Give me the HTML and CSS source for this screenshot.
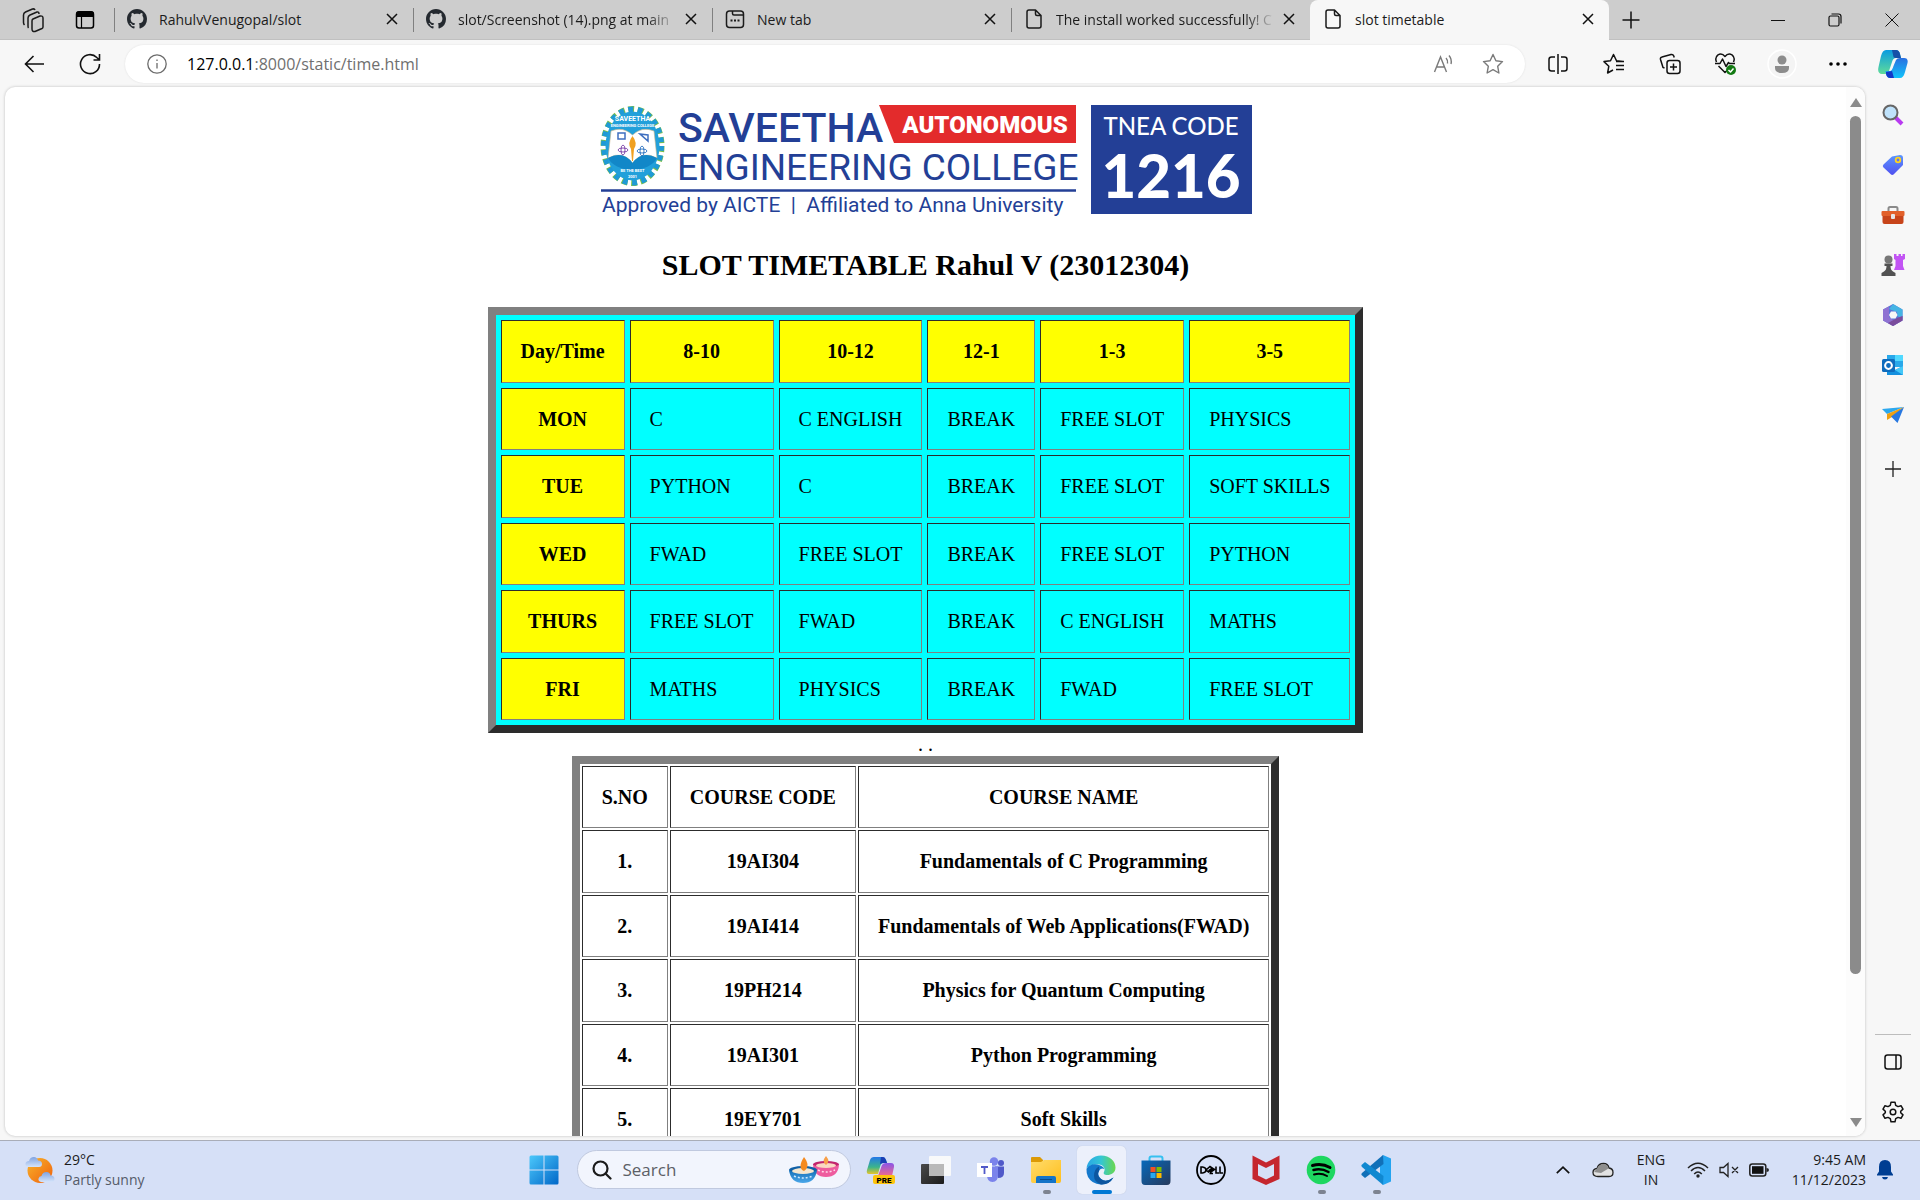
FILE: index.html
```html
<!DOCTYPE html>
<html lang="en">
<head>
<meta charset="utf-8">
<title>slot timetable</title>
<link rel="stylesheet" href="styles.css">
</head>
<body>
<svg class="defs" aria-hidden="true">
  <defs>
    <linearGradient id="gBlue" x1="0" y1="0" x2="1" y2="1"><stop offset="0" stop-color="#4cc8fb"/><stop offset="1" stop-color="#0067c8"/></linearGradient>
    <linearGradient id="gTeal" x1="0" y1="0" x2="0" y2="1"><stop offset="0" stop-color="#0a9be0"/><stop offset="1" stop-color="#5fdc9a"/></linearGradient>
    <linearGradient id="gSky" x1="0" y1="0" x2="0" y2="1"><stop offset="0" stop-color="#2a6fe0"/><stop offset="1" stop-color="#12c4fb"/></linearGradient>
    <linearGradient id="gPink" x1="0" y1="0" x2="0" y2="1"><stop offset="0" stop-color="#8a55e8"/><stop offset="1" stop-color="#f06a8c"/></linearGradient>
    <linearGradient id="gRain" x1="0" y1="0" x2="0" y2="1"><stop offset="0" stop-color="#2478e8"/><stop offset=".6" stop-color="#3cb58a"/><stop offset="1" stop-color="#e8c52a"/></linearGradient>
    <linearGradient id="gTag" x1="0" y1="0" x2="0" y2="1"><stop offset="0" stop-color="#5a96ff"/><stop offset="1" stop-color="#5050f0"/></linearGradient>
    <linearGradient id="gSun" x1="0" y1="0" x2="1" y2="1"><stop offset="0" stop-color="#f8b52c"/><stop offset="1" stop-color="#f0600c"/></linearGradient>
    <linearGradient id="gCloud" x1="0" y1="0" x2="0" y2="1"><stop offset="0" stop-color="#7fa3e2"/><stop offset="1" stop-color="#d5e4fa"/></linearGradient>
    <linearGradient id="gFold" x1="0" y1="0" x2="1" y2="1"><stop offset="0" stop-color="#ffdc6c"/><stop offset="1" stop-color="#ffbe1c"/></linearGradient>
    <linearGradient id="gEdge" x1="0" y1="0" x2="1" y2="0"><stop offset="0" stop-color="#2aa6e6"/><stop offset=".5" stop-color="#34c6d4"/><stop offset="1" stop-color="#6ad84c"/></linearGradient>
    <linearGradient id="gStore" x1="0" y1="0" x2="1" y2="1"><stop offset="0" stop-color="#0669bb"/><stop offset="1" stop-color="#273a5c"/></linearGradient>
    <linearGradient id="gPane" x1="0" y1="0" x2="1" y2="1"><stop offset="0" stop-color="#4a4a4a"/><stop offset="1" stop-color="#1c1c1c"/></linearGradient>
    <linearGradient id="gBowl" x1="0" y1="0" x2="0" y2="1"><stop offset="0" stop-color="#1470b8"/><stop offset="1" stop-color="#4ca8ea"/></linearGradient>
  </defs>
</svg>

<div class="browser">
  <header class="tabstrip">
    <div class="strip-start">
      <button class="icon-btn" aria-label="Workspaces"><svg width="22" height="26" viewBox="0 0 22 26" fill="none" stroke="#1b1b1b" stroke-width="1.5" stroke-linejoin="round"><path d="M11 12 L18 9 Q21 8.500 21 11 V20 Q21 21 20 21.500 L13 24.500 Q10 25 10 22 V14 Q10 12.500 11 12Z"/><path d="M6.500 21 Q6 20.500 6 19 V11 Q6 9 8 8 L15 5 Q17 4.500 17 7"/><path d="M2.500 18 Q1.500 17 1.500 15.500 V8 Q1.500 6 3.500 5 L10.500 2 Q12.500 1.500 13 3"/></svg></button>
      <button class="icon-btn" aria-label="Tab actions"><svg width="20" height="20" viewBox="0 0 20 20"><rect x="1.500" y="2" width="17" height="16" rx="2.500" fill="none" stroke="#000" stroke-width="1.500"/><path d="M1 7V4Q1 1 4 1H16Q19 1 19 4V7Z"/><path d="M6.500 7V18" stroke="#000" stroke-width="1.200"/></svg></button>
    </div>
    <nav class="tabs" aria-label="Tabs">
      <div class="tab"><svg class="fav" viewBox="0 0 16 16" fill="#24292f"><path d="M8 0C3.580 0 0 3.580 0 8c0 3.540 2.290 6.530 5.470 7.590.4.070.55-.17.55-.38 0-.19-.01-.82-.01-1.490-2.010.37-2.530-.49-2.690-.94-.09-.23-.48-.94-.82-1.130-.28-.15-.68-.52-.01-.53.63-.01 1.080.58 1.230.82.72 1.210 1.870.87 2.330.66.070-.52.28-.87.510-1.070-1.780-.2-3.640-.89-3.640-3.950 0-.87.310-1.590.82-2.150-.08-.2-.36-1.020.08-2.120 0 0 .67-.21 2.200.82.64-.18 1.320-.27 2-.27s1.360.09 2 .27c1.530-1.040 2.200-.82 2.200-.82.44 1.100.16 1.920.08 2.120.51.56.82 1.270.82 2.150 0 3.070-1.870 3.750-3.650 3.950.29.25.54.73.54 1.480 0 1.070-.01 1.930-.01 2.200 0 .21.15.46.55.38A8.010 8.010 0 0 0 16 8c0-4.420-3.580-8-8-8z"/></svg><a class="tab-title" href="#">RahulvVenugopal/slot</a><button class="tab-close" aria-label="Close tab"><svg width="12" height="12" viewBox="0 0 12 12" stroke="#111" stroke-width="1.500"><path d="M1 1 11 11M11 1 1 11"/></svg></button></div>
      <div class="tab"><svg class="fav" viewBox="0 0 16 16" fill="#24292f"><path d="M8 0C3.580 0 0 3.580 0 8c0 3.540 2.290 6.530 5.470 7.590.4.070.55-.17.55-.38 0-.19-.01-.82-.01-1.490-2.010.37-2.530-.49-2.690-.94-.09-.23-.48-.94-.82-1.130-.28-.15-.68-.52-.01-.53.63-.01 1.080.58 1.230.82.72 1.210 1.870.87 2.330.66.070-.52.28-.87.510-1.070-1.780-.2-3.640-.89-3.640-3.950 0-.87.310-1.590.82-2.150-.08-.2-.36-1.020.08-2.120 0 0 .67-.21 2.200.82.64-.18 1.320-.27 2-.27s1.360.09 2 .27c1.530-1.040 2.200-.82 2.200-.82.44 1.100.16 1.920.08 2.120.51.56.82 1.270.82 2.150 0 3.070-1.870 3.750-3.650 3.950.29.25.54.73.54 1.480 0 1.070-.01 1.930-.01 2.200 0 .21.15.46.55.38A8.010 8.010 0 0 0 16 8c0-4.420-3.580-8-8-8z"/></svg><a class="tab-title fade" href="#">slot/Screenshot (14).png at main</a><button class="tab-close" aria-label="Close tab"><svg width="12" height="12" viewBox="0 0 12 12" stroke="#111" stroke-width="1.500"><path d="M1 1 11 11M11 1 1 11"/></svg></button></div>
      <div class="tab"><svg class="fav" viewBox="0 0 20 20" fill="none" stroke="#1b1b1b" stroke-width="1.500"><rect x="1.500" y="2" width="17" height="16.500" rx="3"/><path d="M7.500 2V4.500Q7.500 6 9 6H18.500"/><path d="M5.500 11.500h2M9 11.500h2M12.500 11.500h2" stroke-width="2"/></svg><a class="tab-title" href="#">New tab</a><button class="tab-close" aria-label="Close tab"><svg width="12" height="12" viewBox="0 0 12 12" stroke="#111" stroke-width="1.500"><path d="M1 1 11 11M11 1 1 11"/></svg></button></div>
      <div class="tab"><svg class="fav" viewBox="0 0 20 20" fill="none" stroke="#1b1b1b" stroke-width="1.500" stroke-linejoin="round"><path d="M5 1H11.500L17 6.500V17Q17 19 15 19H5Q3 19 3 17V3Q3 1 5 1ZM11.500 1V5Q11.500 6.500 13 6.500H17"/></svg><a class="tab-title fade" href="#">The install worked successfully! C</a><button class="tab-close" aria-label="Close tab"><svg width="12" height="12" viewBox="0 0 12 12" stroke="#111" stroke-width="1.500"><path d="M1 1 11 11M11 1 1 11"/></svg></button></div>
      <div class="tab active"><svg class="fav" viewBox="0 0 20 20" fill="none" stroke="#1b1b1b" stroke-width="1.500" stroke-linejoin="round"><path d="M5 1H11.500L17 6.500V17Q17 19 15 19H5Q3 19 3 17V3Q3 1 5 1ZM11.500 1V5Q11.500 6.500 13 6.500H17"/></svg><a class="tab-title" href="#">slot timetable</a><button class="tab-close" aria-label="Close tab"><svg width="12" height="12" viewBox="0 0 12 12" stroke="#111" stroke-width="1.500"><path d="M1 1 11 11M11 1 1 11"/></svg></button></div>
    </nav>
    <button class="icon-btn new-tab" aria-label="New tab"><svg width="18" height="18" viewBox="0 0 18 18" stroke="#111" stroke-width="1.500"><path d="M9 0.500V17.500M.5 9H17.500"/></svg></button>
    <div class="window-controls">
      <button class="icon-btn" aria-label="Minimize"><svg width="14" height="14" viewBox="0 0 14 14"><path d="M0 7.500H14" stroke="#111"/></svg></button>
      <button class="icon-btn" aria-label="Restore"><svg width="14" height="14" viewBox="0 0 14 14" fill="none" stroke="#111" stroke-width="1.200"><rect x="1" y="3" width="10" height="10" rx="1.500"/><path d="M3.500 1H10.500Q13 1 13 3.500V10.500"/></svg></button>
      <button class="icon-btn" aria-label="Close"><svg width="14" height="14" viewBox="0 0 14 14"><path d="M.5.500 13.500 13.500M13.500.500.500 13.500" stroke="#111"/></svg></button>
    </div>
  </header>

  <div class="toolbar">
    <button class="icon-btn nav-btn" aria-label="Back"><svg width="20" height="18" viewBox="0 0 20 18" fill="none" stroke="#111" stroke-width="1.600"><path d="M20 9H1.500M9.500 1 1.500 9 9.500 17"/></svg></button>
    <button class="icon-btn nav-btn" aria-label="Refresh"><svg width="22" height="22" viewBox="0 0 22 22" fill="none" stroke="#111" stroke-width="1.600"><path d="M20.500 11A9.500 9.500 0 1 1 17.800 4.500L20.500 7M20.500 1V7H14.500"/></svg></button>
    <form class="address">
      <svg width="20" height="20" viewBox="0 0 20 20" fill="none" stroke="#6b6b6b" stroke-width="1.300"><circle cx="10" cy="10" r="9.200"/><path d="M10 9V14.500M10 5.500V7"/></svg>
      <a class="url" href="#"><b>127.0.0.1</b>:8000/static/time.html</a>
      <button class="icon-btn addr-btn" type="button" aria-label="Read aloud"><svg width="22" height="22" viewBox="0 0 22 22" fill="none" stroke="#7a7a7a" stroke-width="1.400"><path d="M1.500 19 7.500 4 13.500 19M3.500 14H11.500"/><path d="M13 5Q15 7 14.500 10.500M16 2.500Q19 6 18 11"/></svg></button>
      <button class="icon-btn addr-btn" type="button" aria-label="Favorite"><svg width="22" height="22" viewBox="0 0 22 22" fill="none" stroke="#7a7a7a" stroke-width="1.400" stroke-linejoin="round"><path d="M11 1.500 13.900 7.800 20.500 8.600 15.700 13.300 16.900 20 11 16.700 5.100 20 6.300 13.300 1.500 8.600 8.100 7.800Z"/></svg></button>
    </form>
    <div class="actions">
      <button class="icon-btn" aria-label="Split screen"><svg width="20" height="20" viewBox="0 0 20 20" fill="none" stroke="#111" stroke-width="1.500"><path d="M7 3H3.500Q1 3 1 5.500V14.500Q1 17 3.500 17H7M13 3H16.500Q19 3 19 5.500V14.500Q19 17 16.500 17H13M10 0V20"/></svg></button>
      <button class="icon-btn" aria-label="Favorites"><svg width="22" height="22" viewBox="0 0 22 22" fill="none" stroke="#111" stroke-width="1.500" stroke-linejoin="round"><path d="M20 8.500 13.500 7.800 10.500 1.500 7.500 7.800 1 8.600 5.800 13.300 4.600 20 10 17M13 12.500H21M13 8.500H21M13 16.500H21"/></svg></button>
      <button class="icon-btn" aria-label="Collections"><svg width="22" height="22" viewBox="0 0 22 22" fill="none" stroke="#111" stroke-width="1.500"><rect x="8" y="7.500" width="13" height="13" rx="2.500"/><path d="M14.500 10.500V17.500M11 14H18"/><path d="M5.500 15 4 14.500 1.500 6.500Q1 4.500 3 4L12 1.500Q14 1 14.800 3L15.200 4.500"/></svg></button>
      <button class="icon-btn" aria-label="Browser essentials"><svg width="24" height="24" viewBox="0 0 24 24" fill="none" stroke="#111" stroke-width="1.500" stroke-linejoin="round"><path d="M2.500 10Q.5 5.500 4 2.800 8 .8 11 4.500 14 .8 18 2.800 21.500 5.500 19.500 10M4.500 14 11 20.500 13 18.500M1 11.500H6L8.500 7 12 14.500 14.500 10.500 15.500 11.500H21"/><circle cx="17" cy="18" r="5" fill="#137a13" stroke="none"/><path d="M14.500 18 16.500 20 19.500 16.500" stroke="#fff"/></svg></button>
      <button class="icon-btn" aria-label="Profile"><svg width="30" height="30" viewBox="0 0 30 30"><circle cx="15" cy="15" r="14" fill="#f4f4f4" stroke="#fff" stroke-width="1.500"/><circle cx="15" cy="11" r="4.500" fill="#8c8c8c"/><path d="M8 17H22V19Q22 24 15 24T8 19Z" fill="#8c8c8c"/></svg></button>
      <button class="icon-btn" aria-label="More"><svg width="18" height="4" viewBox="0 0 18 4"><circle cx="2" cy="2" r="1.800"/><circle cx="9" cy="2" r="1.800"/><circle cx="16" cy="2" r="1.800"/></svg></button>
      <button class="icon-btn last" aria-label="Copilot"><svg width="30" height="30" viewBox="0 0 30 30"><path d="M8 1H18Q21 1 22 5L23 9H18Q15 9 14 13L11 22Q10 25 7 25H4Q-1 25 .5 18L3 7Q4.500 1 8 1Z" fill="url(#gTeal)"/><path d="M14 1H18Q21 1 22 5L23 9H18Q16 9 15.500 8Z" fill="#1650a8"/><path d="M22 29H12Q9 29 8 25L7.500 22H12Q14 22 15.500 17L18 11Q19 9 22 9H26Q30.500 9 29.500 14L27 23Q25.500 29 22 29Z" fill="url(#gSky)"/><path d="M16 29H12Q9 29 8 25V23L14 22Z" fill="#1438c8"/></svg></button>
    </div>
  </div>

  <div class="workspace">
    <div class="viewport">
      <main class="page">
        <svg class="banner" width="652" height="114" viewBox="599 105 652 114" role="img" aria-label="Saveetha Engineering College">
          <ellipse cx="631.500" cy="146" rx="28.500" ry="36.500" fill="none" stroke="#7bbf4a" stroke-width="7" stroke-dasharray="5.800 3.530"/>
          <ellipse cx="631.500" cy="146" rx="28" ry="36" fill="none" stroke="#1f9ad6" stroke-width="7" stroke-dasharray="4.800 4.390"/>
          <ellipse cx="631.500" cy="146" rx="27" ry="34.500" fill="#22a0da"/>
          <path d="M610 131Q622 126 631.500 135 641 126 653 131L656 158Q641 150 631.500 163 622 150 607 158Z" fill="#fff" stroke="#c9b48a" stroke-width=".6"/>
          <path d="M607 158Q622 150 631.500 163 641 150 656 158 650 169 631.500 170 613 169 607 158Z" fill="#1287c8"/>
          <path d="M631.500 136Q637 143 633 149L632 161H631L630 149Q626 143 631.500 136Z" fill="#f0a020"/>
          <path d="M617 133h7v6h-7zM639 134l8 1v6z" fill="none" stroke="#3f6fc0" stroke-width="1.500"/>
          <g fill="none" stroke="#7a3fa8" stroke-width=".9"><ellipse cx="622" cy="150" rx="5" ry="2"/><ellipse cx="622" cy="150" rx="2" ry="5"/><ellipse cx="641" cy="151" rx="5" ry="2" stroke="#2a70c0"/><ellipse cx="641" cy="151" rx="2" ry="5" stroke="#2a70c0"/></g>
          <text x="631.500" y="121" class="seal">SAVEETHA</text>
          <text x="631.500" y="127" class="seal tiny">ENGINEERING COLLEGE</text>
          <text x="631.500" y="172" class="seal tiny">BE THE BEST</text>
          <text x="631.500" y="178" class="seal tiny">2001</text>
          <text x="677" y="142" class="brand-lg">SAVEETHA</text>
          <path d="M878 105H1075V143H893Z" fill="#e32b2c"/>
          <text x="984" y="133" class="brand-auto">AUTONOMOUS</text>
          <text x="676" y="180" class="brand-md">ENGINEERING COLLEGE</text>
          <path d="M600 190.500H1075" stroke="#233f96" stroke-width="2.500"/>
          <text x="601" y="212" class="brand-sm">Approved by AICTE&#160; |&#160; Affiliated to Anna University</text>
          <rect x="1090" y="105" width="161" height="109" fill="#233f96"/>
          <text x="1170" y="135" class="code-sm">TNEA CODE</text>
          <text x="1170" y="198" class="code-lg">1216</text>
        </svg>
        <h2>SLOT TIMETABLE Rahul V (23012304)</h2>
        <table class="slots">
          <tr><th>Day/Time</th><th>8-10</th><th>10-12</th><th>12-1</th><th>1-3</th><th>3-5</th></tr>
          <tr><th>MON</th><td>C</td><td>C ENGLISH</td><td>BREAK</td><td>FREE SLOT</td><td>PHYSICS</td></tr>
          <tr><th>TUE</th><td>PYTHON</td><td>C</td><td>BREAK</td><td>FREE SLOT</td><td>SOFT SKILLS</td></tr>
          <tr><th>WED</th><td>FWAD</td><td>FREE SLOT</td><td>BREAK</td><td>FREE SLOT</td><td>PYTHON</td></tr>
          <tr><th>THURS</th><td>FREE SLOT</td><td>FWAD</td><td>BREAK</td><td>C ENGLISH</td><td>MATHS</td></tr>
          <tr><th>FRI</th><td>MATHS</td><td>PHYSICS</td><td>BREAK</td><td>FWAD</td><td>FREE SLOT</td></tr>
        </table>
        <p class="dots">. .</p>
        <table class="courses">
          <tr><th>S.NO</th><th>COURSE CODE</th><th>COURSE NAME</th></tr>
          <tr><th>1.</th><th>19AI304</th><th>Fundamentals of C Programming</th></tr>
          <tr><th>2.</th><th>19AI414</th><th>Fundamentals of Web Applications(FWAD)</th></tr>
          <tr><th>3.</th><th>19PH214</th><th>Physics for Quantum Computing</th></tr>
          <tr><th>4.</th><th>19AI301</th><th>Python Programming</th></tr>
          <tr><th>5.</th><th>19EY701</th><th>Soft Skills</th></tr>
        </table>
      </main>
      <div class="scrollbar">
        <svg width="12" height="9" viewBox="0 0 12 9"><path d="M6 0 12 9H0Z" fill="#8b8b8b"/></svg>
        <div class="track"><div class="thumb"></div></div>
        <svg width="12" height="9" viewBox="0 0 12 9"><path d="M6 9 12 0H0Z" fill="#8b8b8b"/></svg>
      </div>
    </div>
    <aside class="sidebar">
      <button class="icon-btn" aria-label="Search"><svg width="22" height="22" viewBox="0 0 22 22"><path d="M13.500 13.500 20 20" stroke="#b83af0" stroke-width="4"/><circle cx="8.500" cy="8.500" r="7" fill="#bfe2fb" stroke="#666" stroke-width="2"/></svg></button>
      <button class="icon-btn" aria-label="Shopping"><svg width="22" height="22" viewBox="0 0 22 22"><path d="M10 2.500 18 1Q21 1 21 4V11L11.500 20.500Q10 21.500 8.500 20L1.500 13.500Q0 12 1.500 10.500Z" fill="url(#gTag)"/><circle cx="16" cy="6" r="2.300" fill="#5a76f8" stroke="#ffd21f" stroke-width="1.800"/></svg></button>
      <button class="icon-btn" aria-label="Tools"><svg width="24" height="20" viewBox="0 0 24 20"><path d="M7.500 6V3.500Q7.500 2 9 2H15Q16.500 2 16.500 3.500V6" fill="none" stroke="#8a8a8a" stroke-width="2"/><rect x="1.500" y="8" width="21" height="11" rx="2" fill="#c7441a"/><rect x=".5" y="6" width="23" height="5" rx="1" fill="#e2602a"/><rect x="10" y="9" width="4" height="5" rx="1" fill="#e6e6e6"/></svg></button>
      <button class="icon-btn" aria-label="Games"><svg width="24" height="24" viewBox="0 0 24 24"><path d="M13 1h2.500v2h2V1h2.500v2h1.500V1H24V6l-2 1V13l1.500 4H13L14.500 13V7L13 6Z" fill="#c254f4"/><circle cx="7.500" cy="6.500" r="4" fill="#777"/><path d="M3.500 10.500h8v2.500h-2Q9.500 17 12 18.500L14.500 20V23H.5V20L3 18.500Q5.500 17 5.500 13h-2Z" fill="#525252"/></svg></button>
      <button class="icon-btn" aria-label="Microsoft 365"><svg width="22" height="22" viewBox="0 0 22 22"><path d="M11 0 20.500 5.500V16.500L11 22 1 16.500V5.500Z" fill="#5b74d6"/><path d="M11 0 20.500 5.500V15L15.500 12 15 8 7 5Z" fill="#45b4e4"/><path d="M1 5.500 7 2.500V13L11 16 20.500 12V16.500L11 22 1 16.500Z" fill="#8f72d2"/><path d="M11 22 20.500 16.500V12L15 14 6 19Z" fill="#7a4c9c"/><path d="M9 7.500H13.500L15.500 11 13.500 14.500H9L7 11Z" fill="#f7f7f7"/></svg></button>
      <button class="icon-btn" aria-label="Outlook"><svg width="22" height="22" viewBox="0 0 22 22"><rect x="5" y="1" width="16" height="12" fill="#28a8ea"/><path d="M13 1H21V7H13Z" fill="#50d9ff"/><path d="M5 12 13 16 21 12V21H5Z" fill="#1490df"/><path d="M13 16 21 12V21Z" fill="#44c8f8"/><rect y="5" width="13" height="13" rx="1.500" fill="#0f6cbd"/><circle cx="6.500" cy="11.500" r="3.400" fill="none" stroke="#fff" stroke-width="2"/></svg></button>
      <button class="icon-btn" aria-label="Drop"><svg width="22" height="18" viewBox="0 0 22 18"><path d="M0 3 22 1 5 8Z" fill="#2ca8ee"/><path d="M22 1 5 8 5 14 10 11Z" fill="#f0a010"/><path d="M22 1 9 10.500 15.500 17Z" fill="#2878e0"/></svg></button>
      <button class="icon-btn add" aria-label="Customize"><svg width="16" height="16" viewBox="0 0 16 16" stroke="#222" stroke-width="1.300"><path d="M8 0V16M0 8H16"/></svg></button>
      <div class="side-end">
        <button class="icon-btn" aria-label="Toggle sidebar"><svg width="18" height="16" viewBox="0 0 18 16" fill="none" stroke="#111" stroke-width="1.500"><rect x="1" y="1" width="16" height="14" rx="2.500"/><path d="M12 1V15"/></svg></button>
        <button class="icon-btn" aria-label="Settings"><svg width="22" height="22" viewBox="0 0 22 22" fill="none" stroke="#111" stroke-width="1.500" stroke-linejoin="round"><path d="M9 1.200H13L13.700 4.300 16 5.600 19 4.700 21 8.100 18.700 10.200V11.800L21 13.900 19 17.300 16 16.400 13.700 17.700 13 20.800H9L8.300 17.700 6 16.400 3 17.300 1 13.900 3.300 11.800V10.200L1 8.100 3 4.700 6 5.600 8.300 4.300Z"/><circle cx="11" cy="11" r="2.800"/></svg></button>
      </div>
    </aside>
  </div>
</div>

<footer class="taskbar">
  <button class="weather">
    <svg width="30" height="28" viewBox="0 0 30 28"><circle cx="15" cy="14.500" r="12.500" fill="url(#gSun)"/><path d="M3 11Q0 10 .5 7.500 1 5 4 5 5 1 9 1 12 1 13 4.500 17 4.500 17 8 17 11 14 11Z" fill="url(#gCloud)"/><path d="M16 26Q13 25 13.500 22.500 14 20 16.500 20 17.500 16 21.500 16 25 16 25.500 19.500 29.500 19.500 29.500 23 29.500 26 26.500 26Z" fill="url(#gCloud)"/></svg>
    <span class="two-line"><span>29°C</span><span class="muted">Partly sunny</span></span>
  </button>
  <div class="apps">
    <button class="app" aria-label="Start"><svg width="30" height="30" viewBox="0 0 30 30" fill="url(#gBlue)"><path d="M.5 2Q.5.500 2 .5H14.500V14.500H.5ZM15.500.5H28Q29.500.5 29.500 2V14.500H15.500ZM.5 15.500H14.500V29.500H2Q.5 29.500.5 28ZM15.500 15.500H29.500V28Q29.500 29.500 28 29.500H15.500Z"/></svg></button>
    <label class="search"><svg width="20" height="20" viewBox="0 0 20 20" fill="none" stroke="#1b1b1b" stroke-width="2.200"><circle cx="8.500" cy="8.500" r="7"/><path d="M13.500 13.500 18.500 18.500" stroke-linecap="round"/></svg><input type="text" placeholder="Search" aria-label="Search"><svg width="50" height="28" viewBox="0 0 50 28"><path d="M37 0Q42 6 37 9 32 6 37 0Z" fill="#f8a04a"/><ellipse cx="37" cy="8.500" rx="13" ry="3.500" fill="#c2246c"/><path d="M24 9Q37 14 50 9 49 21 37 21 25 21 24 9Z" fill="#ee5c9e"/><ellipse cx="37" cy="9.500" rx="10" ry="2.500" fill="#fbd9c4"/><path d="M37 1Q41 6 37 9 33 6 37 1Z" fill="#f8a04a"/><ellipse cx="14" cy="14" rx="14" ry="4" fill="#0f5fa6"/><path d="M0 14.500Q14 20 28 14.500 26 27 14 27 2 27 0 14.500Z" fill="url(#gBowl)"/><ellipse cx="14" cy="15" rx="11" ry="3" fill="#f3e6cf"/><path d="M15 1Q22 10 15 15 8 12 15 1Z" fill="#f58a1f"/><path d="M5 20Q14 24 24 20" fill="none" stroke="#cfeaff" stroke-width="1.500" stroke-dasharray="2 2"/><path d="M29 14Q37 18 46 14" fill="none" stroke="#ffd9ea" stroke-width="1.500" stroke-dasharray="2 2"/></svg></label>
    <button class="app" aria-label="Copilot preview"><svg width="30" height="28" viewBox="0 0 30 28"><path d="M8 1H17Q19 1 20 4L21 7H17Q15 7 14 11L12 18H3Q0 18 1 14L4 4Q5 1 8 1Z" fill="url(#gRain)"/><path d="M15 1H17Q19 1 20 4L21 7H17L14 8Z" fill="#1a3fb4"/><path d="M12 20 16 9Q17 7 20 7H25Q28.500 7 28 11L26 20Z" fill="url(#gPink)"/><rect x="7" y="19" width="22" height="9" rx="2" fill="#fcc40c"/><text x="18" y="26.500" class="pre">PRE</text></svg></button>
    <button class="app" aria-label="Task view"><svg width="30" height="28" viewBox="0 0 30 28"><rect y="8" width="23" height="20" rx="1" fill="url(#gPane)"/><rect x="8" width="22" height="20" rx="1" fill="#fafafa" fill-opacity=".95"/><path d="M8 8H23V20H8Z" fill="#b9b9b9"/></svg></button>
    <button class="app" aria-label="Teams"><svg width="28" height="26" viewBox="0 0 28 26"><circle cx="17" cy="4.500" r="4.200" fill="#7b83eb"/><circle cx="24" cy="6" r="3" fill="#5059c9"/><path d="M18 9.500H27V16Q27 21 21 21Z" fill="#5059c9"/><path d="M10 9.500H21V18Q21 25 15.500 25T10 18Z" fill="#7b83eb"/><rect y="6" width="15" height="14" fill="#fff"/><path d="M4 10H11M7.500 10V17" stroke="#5059c9" stroke-width="1.800"/></svg></button>
    <button class="app running" aria-label="File Explorer"><svg width="30" height="28" viewBox="0 0 30 28"><path d="M0 2Q0 1 1 1H9L12 4V8H0Z" fill="#dc9a06"/><path d="M0 6H10L13 4H30V25Q30 27 28 27H2Q0 27 0 25Z" fill="url(#gFold)"/><path d="M5 27V22Q5 20 7 20H23Q25 20 25 22V27Z" fill="#1474c8"/><path d="M9 23.500H21" stroke="#0a4c8c"/></svg></button>
    <button class="app running current" aria-label="Microsoft Edge"><svg width="30" height="30" viewBox="0 0 30 30"><path d="M.5 14C1 6 7 .5 15 .5 24 .5 29.500 6.500 29.500 12.500 29.500 18 25 20 21.500 20 18 20 17 18.500 18 17 20 13 17 10 13 9.500 7 9 2 11 .5 14Z" fill="url(#gEdge)"/><path d="M.5 14Q4 8.500 11 9.500 17 10.500 18.500 14 15 12.500 13 16 11 20 15 24 20 28 27.500 22.500 23 30 14.500 29.500 6 29 2 22 .2 18 .5 14Z" fill="#1478cc"/><path d="M13 16Q10 20 15 24 20 28 27.500 22.500 23 30 15 29.500 8 27 8 21 8 14 13 11.500Z" fill="#0c56a0"/></svg></button>
    <button class="app" aria-label="Microsoft Store"><svg width="30" height="30" viewBox="0 0 30 30"><path d="M8.500 6V3.500Q8.500 1.500 10.500 1.500H19.500Q21.500 1.500 21.500 3.500V6" fill="none" stroke="#36c0f0" stroke-width="2"/><path d="M.5 5.500H29.500V26Q29.500 30 26 30H4Q.5 30 .5 26Z" fill="url(#gStore)"/><path d="M9.500 12h5v5h-5z" fill="#f25022"/><path d="M15.500 12h5v5h-5z" fill="#7fba00"/><path d="M9.500 18h5v5h-5z" fill="#28a8f0"/><path d="M15.500 18h5v5h-5z" fill="#ffb900"/></svg></button>
    <button class="app" aria-label="Dell"><svg width="30" height="30" viewBox="0 0 30 30" fill="none" stroke="#000" stroke-width="1.800"><circle cx="15" cy="15" r="14"/><path d="M5 12V18H6.500Q10 17.500 10 15T6.500 12ZM20 11.500V18H23M24 11.500V18H27M10 15 14 11.500 17 13.500 12.500 17 10 15M12.500 16 16.500 13M14 17.500 19 14M13.500 18.500H17" stroke-width="1.600"/></svg></button>
    <button class="app" aria-label="McAfee"><svg width="28" height="30" viewBox="0 0 28 30"><path d="M.5.500 14 7.500 27.500.5V24L14 30 .5 24ZM6 9V20.500L14 24.500 22 20.500V9L14 13Z" fill="#c5262e" fill-rule="evenodd"/></svg></button>
    <button class="app running" aria-label="Spotify"><svg width="30" height="30" viewBox="0 0 30 30" fill="none" stroke="#000" stroke-linecap="round"><circle cx="15" cy="15" r="14.300" fill="#1ed760" stroke="none"/><path d="M6.500 10.500Q16 8 24 12.500" stroke-width="3"/><path d="M7.500 15Q15.500 13 22.500 17" stroke-width="2.500"/><path d="M8 19.500Q15 17.500 21 21" stroke-width="2"/></svg></button>
    <button class="app running" aria-label="Visual Studio Code"><svg width="30" height="30" viewBox="0 0 30 30"><path d="M22 0 30 3.500V26.500L22 30 19 22V8Z" fill="#24a4f0"/><path d="M22 0 22.500 9 4 23 .5 20Q0 19 1 18Z" fill="#1170b8"/><path d="M22 30 22.500 21 4 7 .5 10Q0 11 1 12Z" fill="#1088d0"/></svg></button>
  </div>
  <div class="tray">
    <button class="icon-btn" aria-label="Show hidden icons"><svg width="14" height="8" viewBox="0 0 14 8" fill="none" stroke="#111" stroke-width="1.700"><path d="M.8 7.200 7 1.200 13.200 7.200"/></svg></button>
    <button class="icon-btn" aria-label="OneDrive"><svg width="22" height="16" viewBox="0 0 22 16"><path d="M6 14.500Q1 14.500 1 10.500 1 7 5 6.500 6.500 1.500 11.500 1.500 16 1.500 17 6 21 6.500 21 10.500 21 14.500 17 14.500Z" fill="#e2e2e2" stroke="#222" stroke-width="1.300"/><path d="M2 10 5 6.500Q7 2 11.500 2 16 2 16.500 6.500L9 11Z" fill="#8e8e8e"/></svg></button>
    <button class="lang">ENG<br>IN</button>
    <button class="status" aria-label="Network, volume, battery">
      <svg width="22" height="16" viewBox="0 0 22 16" fill="none" stroke="#222" stroke-width="1.500"><path d="M1 6Q11-3.500 21 6M4 9Q11 2 18 9M7.200 12Q11 8 14.800 12"/><circle cx="11" cy="14" r="1.700" fill="#222" stroke="none"/></svg>
      <svg width="20" height="16" viewBox="0 0 20 16" fill="none" stroke="#222" stroke-width="1.300"><path d="M1 5.500H4.500L9 1.500V14.500L4.500 10.500H1ZM13 5 19 11M19 5 13 11"/></svg>
      <svg width="20" height="14" viewBox="0 0 20 14"><rect x=".8" y="1" width="16" height="12" rx="2.500" fill="none" stroke="#222" stroke-width="1.500"/><rect x="3" y="3.200" width="11.500" height="7.600" fill="#111"/><path d="M17.500 5Q20 5 20 7T17.500 9Z" fill="#222"/></svg>
    </button>
    <button class="clock">9:45 AM<br>11/12/2023</button>
    <button class="icon-btn bell" aria-label="Notifications"><svg width="16" height="20" viewBox="0 0 16 20" fill="#003e92"><path d="M8 0Q14 0 14 7V11.500L16 14.500V15.500H0V14.500L2 11.500V7Q2 0 8 0ZM5 17H11Q10.500 19.500 8 19.500T5 17Z"/></svg></button>
  </div>
</footer>
</body>
</html>
```
FILE: styles.css
```css
* { box-sizing: border-box; }

body {
  margin: 0;
  height: 100vh;
  display: flex;
  flex-direction: column;
  overflow: hidden;
  font-family: "Open Sans", "Noto Sans", sans-serif;
  font-size: 14px;
  color: #1b1b1b;
  background: #f7f7f7;
}

button {
  font: inherit;
  color: inherit;
  border: 0;
  padding: 0;
  background: none;
}

a { color: inherit; text-decoration: none; }
svg { flex: none; display: block; }
.defs { position: absolute; width: 0; height: 0; }
.icon-btn { display: flex; align-items: center; justify-content: center; flex: none; }

.browser { flex: 1; min-height: 0; display: flex; flex-direction: column; }

/* Tab strip */
.tabstrip { display: flex; height: 40px; flex: none; background: #cdcdcd; border-bottom: 1px solid #c0c0c0; }
.strip-start { display: flex; width: 114px; padding-left: 7px; }
.strip-start .icon-btn { width: 52px; }
.tabs { display: flex; }
.tab {
  width: 299px;
  height: 40px;
  display: flex;
  align-items: center;
  padding: 0 15px 2px 13px;
  position: relative;
}
.tab::before { content: ""; position: absolute; left: 0; top: 8px; width: 1px; height: 24px; background: #808080; }
.tab.active { background: #f7f7f7; border-radius: 8px 8px 0 0; }
.tab.active::before { display: none; }
.fav { width: 20px; height: 20px; }
.tab-title { flex: 1; min-width: 0; margin: 0 8px 0 12px; white-space: nowrap; }
.tab-title.fade { mask-image: linear-gradient(to right, #000 86%, transparent); }
.tab-close { width: 12px; height: 12px; }
.new-tab { width: 44px; }
.window-controls { display: flex; margin-left: auto; }
.window-controls .icon-btn { width: 57px; }

/* Address row */
.toolbar { display: flex; align-items: center; flex: none; height: 47px; padding-left: 6px; }
.nav-btn { width: 56px; }
.address {
  flex: 1;
  display: flex;
  align-items: center;
  height: 38px;
  margin: 0 5px 0 7px;
  padding: 0 8px 0 22px;
  border-radius: 19px;
  background: #fff;
  box-shadow: 0 0 2px #ddd;
}
.url { flex: 1; margin-left: 20px; font-size: 16px; color: #6f6f6f; }
.url b { font-weight: 400; color: #000; }
.addr-btn { width: 49px; }
.actions { display: flex; }
.actions .icon-btn { width: 56px; }
.actions .last { width: 54px; }

/* Page area */
.workspace { flex: 1; min-height: 0; display: flex; padding-left: 5px; }
.viewport {
  flex: 1;
  display: flex;
  margin-bottom: 4px;
  overflow: hidden;
  background: #fff;
  border-radius: 10px;
  box-shadow: 0 0 3px #bbb;
}
.page {
  flex: 1;
  min-width: 0;
  padding-top: 18px;
  font-family: "Liberation Serif", "Times New Roman", serif;
  font-size: 20px;
  line-height: 23px;
  color: #000;
}
.banner { margin: 0 auto 29px; }
.page h2 { margin: 0 0 25px; font-size: 30px; line-height: 34px; text-align: center; }
.page table { margin: 0 auto; border: 8px solid; border-color: #808080 #2c2c2c #2c2c2c #808080; }
.page th, .page td {
  padding: 19px;
  border: 1px solid;
  border-color: #2c2c2c #808080 #808080 #2c2c2c;
  white-space: nowrap;
}
.slots { height: 426px; border-spacing: 5px; background: #0ff; line-height: 22px; }
.slots th { background: #ff0; }
.courses { border-spacing: 2px; }
.courses tr:nth-child(odd) { line-height: 22px; }
.dots { margin: 0; text-align: center; }

.seal { font: 700 7px "Roboto", sans-serif; fill: #fff; text-anchor: middle; }
.seal.tiny { font-size: 4px; }
.brand-lg, .brand-md, .brand-sm { font-family: "Roboto", sans-serif; fill: #233f96; }
.brand-lg { font-size: 41px; font-weight: 500; }
.brand-md { font-size: 37px; }
.brand-sm { font-size: 21px; }
.brand-auto { font: 900 24px "Roboto", sans-serif; fill: #fff; text-anchor: middle; }
.code-sm { font: 500 24px "Lato", sans-serif; fill: #fff; text-anchor: middle; }
.code-lg { font: 900 60px "Lato", sans-serif; fill: #fff; text-anchor: middle; }

.scrollbar {
  width: 19px;
  display: flex;
  flex-direction: column;
  align-items: center;
  padding: 11px 0 9px;
  background: #fcfcfc;
}
.track { flex: 1; display: flex; flex-direction: column; width: 11px; margin: 9px 0; }
.track::after { content: ""; flex: 3; }
.thumb { flex: 19; border-radius: 6px; background: #8b8b8b; }

.sidebar { width: 55px; display: flex; flex-direction: column; align-items: center; padding: 3px 0; }
.sidebar .icon-btn { width: 48px; height: 50px; }
.sidebar .add { margin-top: 4px; }
.side-end { margin-top: auto; position: relative; }
.side-end::before { content: ""; position: absolute; top: -3px; left: 6px; right: 6px; height: 1px; background: #bdbdbd; }

/* Taskbar */
.taskbar {
  flex: none;
  height: 60px;
  display: grid;
  grid-template-columns: 1fr auto 1fr;
  align-items: center;
  padding-bottom: 2px;
  background: #d6e0f7;
  border-top: 1px solid #a9adb8;
  line-height: 20px;
}
.weather { display: flex; align-items: center; gap: 9px; padding-left: 25px; text-align: left; }
.two-line { display: flex; flex-direction: column; }
.muted { color: #555b69; }
.apps { display: flex; align-items: center; }
.app {
  width: 55px;
  height: 48px;
  display: flex;
  align-items: center;
  justify-content: center;
  position: relative;
}
.app.running::after {
  content: "";
  position: absolute;
  bottom: 0;
  left: 24px;
  width: 8px;
  height: 4px;
  border-radius: 2px;
  background: #7d8391;
}
.app.current { width: 49px; margin: 0 3px; border-radius: 5px; background: #ecf0fb; box-shadow: 0 0 1px #b4bcd0; }
.app.current::after { left: 15px; width: 20px; background: #0078d4; }
.search {
  display: flex;
  align-items: center;
  width: 274px;
  height: 39px;
  margin: 0 3px 0 5px;
  padding: 0 11px 0 14px;
  border: 1px solid #c0c9df;
  border-radius: 20px;
  background: #f2f5fd;
}
.search input {
  flex: 1;
  min-width: 0;
  margin-left: 11px;
  padding: 0;
  border: 0;
  background: none;
  font: inherit;
  font-size: 17px;
}
.search input::placeholder { color: #5c5f66; }
.pre { font: 900 8px "Roboto", sans-serif; text-anchor: middle; }

.tray { display: flex; align-items: center; justify-content: flex-end; padding-right: 16px; }
.tray .icon-btn { width: 40px; }
.lang { width: 56px; text-align: center; }
.status { display: flex; align-items: center; gap: 10px; margin-left: 8px; }
.clock { width: 97px; text-align: right; }
.tray .bell { width: 38px; }
```
